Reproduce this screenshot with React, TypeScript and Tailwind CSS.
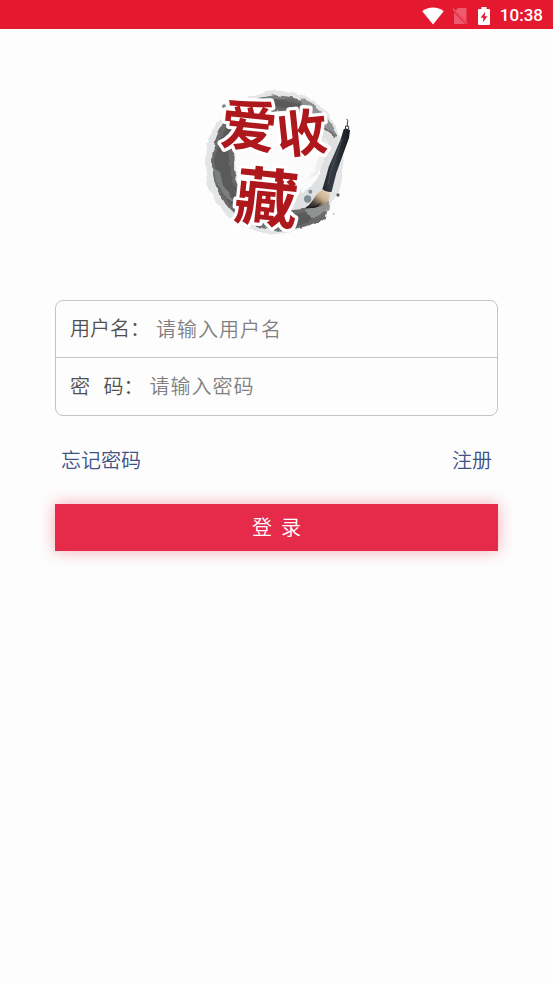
import { useState } from "react";
import type { FormEvent, InputHTMLAttributes } from "react";

export default function App() {
  const [username, setUsername] = useState("");
  const [password, setPassword] = useState("");

  const onSubmit = (e: FormEvent) => {
    e.preventDefault();
  };

  return (
    <div className="flex min-h-screen flex-col bg-[#fdfdfd] font-['Noto_Sans_CJK_SC',sans-serif] text-xl font-[350]">
      <StatusBar />
      <main className="flex flex-col px-[55px] pt-12">
        <Logo />
        <form onSubmit={onSubmit} className="mt-[51px] flex flex-col">
          <div className="divide-y divide-[#c4c4c4] rounded-lg border border-[#c4c4c4]">
            <Field
              id="username"
              label="用户名："
              placeholder="请输入用户名"
              value={username}
              onChange={(e) => setUsername(e.target.value)}
            />
            <Field
              id="password"
              type="password"
              label={"密\u00a0\u00a0\u00a0码："}
              placeholder="请输入密码"
              value={password}
              onChange={(e) => setPassword(e.target.value)}
            />
          </div>
          <div className="mt-7 flex justify-between px-1.5 leading-8 text-[#3f5185]">
            <a href="#forgot">忘记密码</a>
            <a href="#register">注册</a>
          </div>
          <button
            type="submit"
            className="mt-7 h-[47px] bg-[#e62b4a] pb-0.5 whitespace-pre text-white shadow-[0_0_16px_rgba(230,43,74,0.4)]"
          >
            {"登  录"}
          </button>
        </form>
      </main>
    </div>
  );
}

type FieldProps = InputHTMLAttributes<HTMLInputElement> & {
  id: string;
  label: string;
};

function Field({ id, label, ...props }: FieldProps) {
  return (
    <div className="flex h-[57px] items-center gap-1.5 px-3.5 pb-0.5">
      <label htmlFor={id} className="shrink-0 text-[#505050]">
        {label}
      </label>
      <input
        id={id}
        className="h-10 min-w-0 flex-1 bg-transparent tracking-[1px] text-[#505050] outline-none placeholder:text-[#808080]"
        {...props}
      />
    </div>
  );
}

function StatusBar() {
  return (
    <header className="flex h-[29px] items-center justify-end bg-[#e41930] pt-0.5 pr-2.5 text-white">
      <svg viewBox="0 0 22 18" className="mr-2 h-[18px] w-[22px]" fill="currentColor">
        <path d="M11 17.5 0.3 4.2C3.2 1.8 7 .5 11 .5s7.8 1.3 10.7 3.7z" />
      </svg>
      <svg viewBox="0 0 16 18" className="mr-2.5 h-[18px] w-4">
        <path d="M6 1h7.5q1 0 1 1v12.5L3.5 3.5zM2 5.5 13.5 17H3q-1 0-1-1z" fill="#ec5c6e" />
        <path d="M.8 1.8 15.2 16.5" stroke="#ec5c6e" strokeWidth="1.4" />
      </svg>
      <svg viewBox="0 0 12 18" className="mr-2.5 h-[18px] w-3">
        <path d="M3.5 0h5v2H11q1 0 1 1v14q0 1-1 1H1q-1 0-1-1V3q0-1 1-1h2.5z" fill="#fff" />
        <path d="M7.3 4.5 2.7 10.7h2.8L4.8 15.5l4.6-6.3H6.6z" fill="#e41930" />
      </svg>
      <span className="font-['Roboto',sans-serif] text-[17px] font-medium">10:38</span>
    </header>
  );
}

const characters = [
  { text: "爱", x: 90, y: 208, size: 168, turn: "rotate(6 173 145)" },
  { text: "收", x: 256, y: 224, size: 152, turn: "rotate(-6 334 168)" },
  { text: "藏", x: 132, y: 432, size: 190, turn: "rotate(6 227 362)" },
];

// ink ring with the brush lying over its right side
function Logo() {
  return (
    <svg
      viewBox="0 0 516 516"
      className="h-[172px] w-[172px] self-center"
      role="img"
      aria-label="爱收藏"
    >
      <defs>
        <filter id="wash" x="-10%" y="-10%" width="120%" height="120%">
          <feTurbulence type="fractalNoise" baseFrequency="0.03" numOctaves="2" seed="4" />
          <feDisplacementMap
            in="SourceGraphic"
            scale="16"
            xChannelSelector="R"
            yChannelSelector="G"
          />
          <feGaussianBlur stdDeviation="1.5" />
        </filter>
        <linearGradient id="handle" x1="0" x2="1" y1="0" y2="0.2">
          <stop offset="0" stopColor="#171a21" />
          <stop offset="0.5" stopColor="#363a42" />
          <stop offset="1" stopColor="#15181e" />
        </linearGradient>
        <linearGradient id="hair" x1="1" x2="0" y1="0" y2="1">
          <stop offset="0" stopColor="#eee0ca" />
          <stop offset="0.4" stopColor="#c8ad8c" />
          <stop offset="0.7" stopColor="#473b35" />
          <stop offset="1" stopColor="#17191d" />
        </linearGradient>
      </defs>

      <g filter="url(#wash)">
        <path
          d="M250 42C360 32 448 115 457 235 464 370 378 466 262 470 145 475 50 390 42 270 36 140 140 50 250 42Z"
          fill="#e4e5e6"
        />
        <path
          d="M205 64C292 42 366 70 410 132L440 178 405 184 373 127 315 98 240 104C158 130 122 196 128 270 136 341 178 382 235 398L330 394 407 384 402 425C340 465 254 470 183 443 110 413 67 344 63 264 60 172 118 86 205 64Z"
          fill="#6a6a6a"
        />
        <path
          d="M74 225C86 180 106 150 128 130L114 200 110 260 130 325 165 381 225 412 260 440 190 434C124 404 82 350 74 290ZM245 64 333 79 368 108 314 94 244 94ZM300 415 387 395 350 440 300 452Z"
          fill="#5a5a5a"
        />
        <path
          d="M329 64C374 76 414 114 436 177L405 155 377 121 334 91ZM341 402 415 364 412 397 358 425Z"
          fill="#8f9293"
        />
        <path
          d="M66 270 90 285 100 330 140 386 104 362 74 310ZM205 62 252 54 305 64 248 68ZM190 444 263 456 319 444 269 464Z"
          fill="#7c7f7f"
        />
        <path
          d="M245 108C325 92 382 123 403 190 420 262 387 351 333 383 270 413 178 389 145 323 110 229 151 139 245 108Z"
          fill="#fbfbfb"
        />
        <path
          d="M392 151 440 188 442 245 403 346 352 391 303 396 329 350 376 313 402 246 381 190ZM295 365 329 334 345 384 300 400Z"
          fill="#dfe0e1"
        />
        <path d="M404 181 418 205 390 274 355 311 394 226Z" fill="#eeefef" />
      </g>

      <g fill="#7d8d93">
        <circle cx="99" cy="88" r="6" />
        <circle cx="358" cy="344" r="6" />
        <circle cx="350" cy="366" r="11" />
        <circle cx="441" cy="354" r="5" fill="#586167" />
        <circle cx="428" cy="411" r="2" />
        <circle cx="137" cy="410" r="6" fill="#bdd4da" />
      </g>

      <g
        fill="#ae171b"
        stroke="#fff"
        strokeWidth="20"
        strokeLinejoin="round"
        paintOrder="stroke"
        fontWeight="700"
      >
        {characters.map((c) => (
          <text key={c.text} x={c.x} y={c.y} fontSize={c.size} transform={c.turn}>
            {c.text}
          </text>
        ))}
      </g>

      <path
        d="M396 338C378 345 372 360 362 374Q354 386 343 393C368 396 401 389 413 369Q419 356 417 346Z"
        fill="url(#hair)"
      />
      <path d="M343 393Q368 394 391 376 382 390 366 393Z" fill="#16191e" />
      <path
        d="M458 157Q467 151 477 160L474 183 436 288Q429 315 422 344 407 348 394 337L405 300 413 270 448 190Z"
        fill="url(#handle)"
      />
      <path d="M453 187 420 280 411 323" fill="none" stroke="#4c525b" strokeWidth="3" />
      <path
        d="M463 157 464 147 473 148 473 157M469 149V138Q473 130 467 126"
        fill="none"
        stroke="#3c4047"
        strokeWidth="3"
      />
    </svg>
  );
}
